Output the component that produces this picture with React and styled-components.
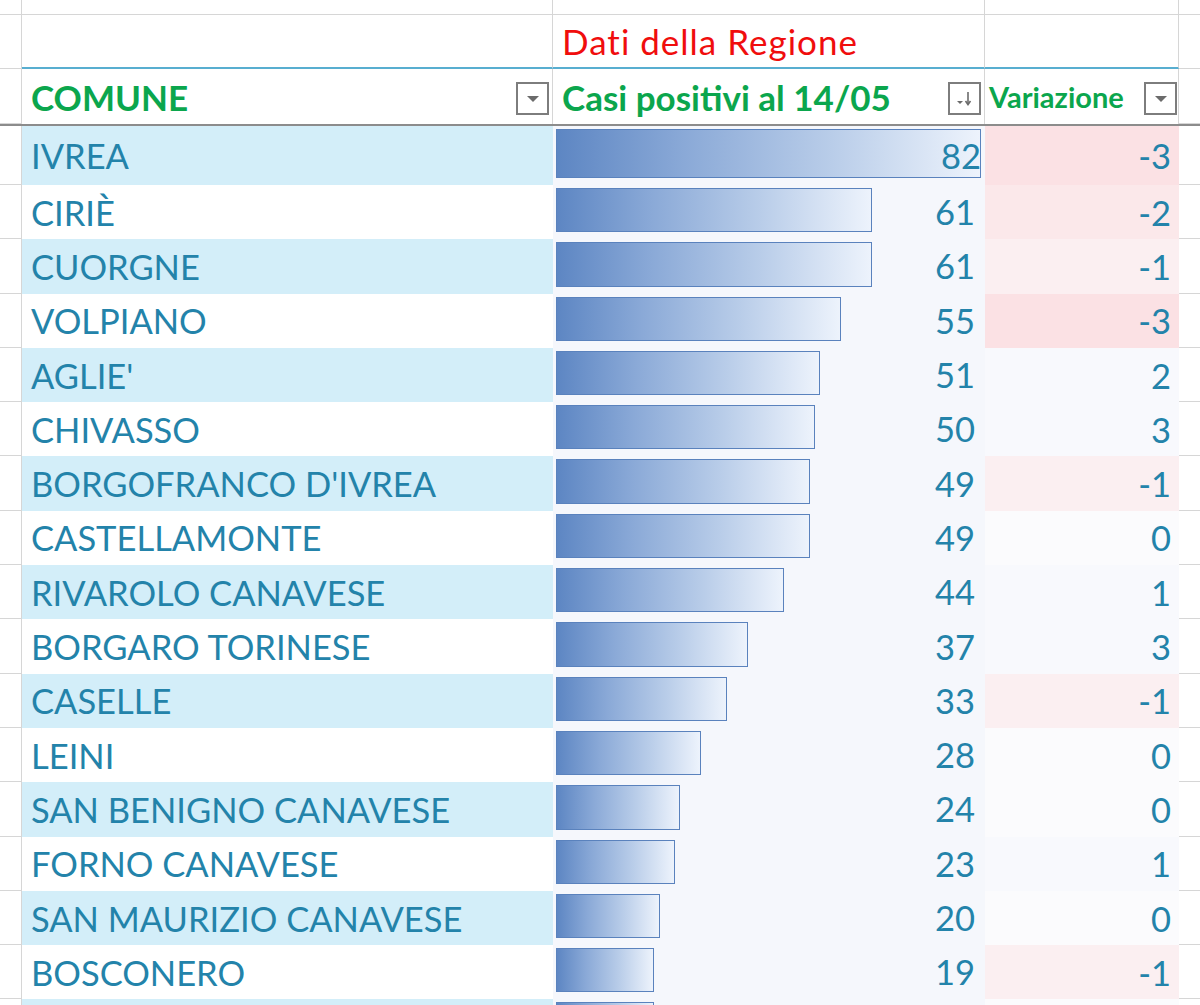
import React from 'react';
import styled, { createGlobalStyle } from 'styled-components';

const data = [
  ['IVREA', 82, -3],
  ['CIRIÈ', 61, -2],
  ['CUORGNE', 61, -1],
  ['VOLPIANO', 55, -3],
  ["AGLIE'", 51, 2],
  ['CHIVASSO', 50, 3],
  ["BORGOFRANCO D'IVREA", 49, -1],
  ['CASTELLAMONTE', 49, 0],
  ['RIVAROLO CANAVESE', 44, 1],
  ['BORGARO TORINESE', 37, 3],
  ['CASELLE', 33, -1],
  ['LEINI', 28, 0],
  ['SAN BENIGNO CANAVESE', 24, 0],
  ['FORNO CANAVESE', 23, 1],
  ['SAN MAURIZIO CANAVESE', 20, 0],
  ['BOSCONERO', 19, -1],
  ['', 19, 0],
];

const MAX = 82;
const BAR_MAX = 425;

const GlobalStyle = createGlobalStyle`
  html, body {
    margin: 0;
    padding: 0;
    background: #fff;
    overflow: hidden;
  }
  body {
    font-family: Lato, "Open Sans", sans-serif;
  }
`;

const Sheet = styled.div`
  width: 1200px;
  height: 1005px;
  overflow: hidden;
  background: #fff;
`;

const Line = styled.div`
  display: grid;
  grid-template-columns: 22px 531px 432px 194px 1fr;
  height: ${p => p.$h}px;
  border-bottom: ${p => p.$rule || 'none'};
`;

const Grid = styled.div`
  border-bottom: 1px solid #d6d6d6;
  border-right: ${p => (p.$edge ? '1px solid #d6d6d6' : 'none')};
`;

const TitleCell = styled.div`
  border-right: 1px solid #d6d6d6;
  border-bottom: 2px solid #58aed0;
  display: flex;
  align-items: center;
  padding-left: 9px;
  color: #f00d0d;
  font-size: 35px;
  letter-spacing: 1px;
`;

const HeadCell = styled.div`
  border-right: 1px solid #d6d6d6;
  display: flex;
  align-items: center;
  justify-content: space-between;
  padding: 0 ${p => p.$pr || 3}px 0 ${p => p.$pl || 9}px;
  color: #0ba64d;
  font-weight: 700;
  font-size: ${p => p.$size || 35}px;
`;

const FilterBtn = styled.div`
  width: 33px;
  height: 33px;
  box-sizing: border-box;
  border: 2px solid #7d7d7d;
  background: #fff;
  display: flex;
  align-items: center;
  justify-content: center;
  flex-shrink: 0;
  margin-top: 3px;
`;

const NameCell = styled.div`
  background: ${p => (p.$alt ? '#d3eef9' : '#fff')};
  display: flex;
  align-items: center;
  padding-left: 9px;
  color: #2383aa;
  font-size: 34.5px;
`;

const BarCell = styled.div`
  background: #f5f7fc;
  display: grid;
  padding: 3px 10px 0 3px;
`;

const Bar = styled.div`
  grid-area: 1 / 1;
  justify-self: start;
  align-self: start;
  height: ${p => p.$h}px;
  box-sizing: border-box;
  border: 1px solid #5a82bd;
  background: linear-gradient(to right, #5d86c3 0%, #8aa9d7 30%, #b9cde9 65%, #edf3fc 100%);
`;

const Num = styled.div`
  grid-area: 1 / 1;
  justify-self: end;
  align-self: center;
  margin-top: ${p => p.$shift}px;
  color: #2383aa;
  font-size: 34.5px;
`;

const tone = v => {
  if (v < 0) {
    const t = -v / 3;
    const g = Math.round(246 - 21 * t);
    const b = Math.round(247 - 19 * t);
    return `rgb(251, ${g}, ${b})`;
  }
  return v === 0 ? '#fbfbfd' : '#f8f9fd';
};

const VarCell = styled.div`
  background: ${p => tone(p.$v)};
  display: flex;
  align-items: center;
  justify-content: flex-end;
  padding-right: 8px;
  color: #2383aa;
  font-size: 34.5px;
`;

const DropIcon = () => (
  <svg width="16" height="10" viewBox="0 0 16 10">
    <path d="M2 3 L14 3 L8 9 Z" fill="#6b6b6b" />
  </svg>
);

const SortIcon = () => (
  <svg width="22" height="22" viewBox="0 0 22 22">
    <path d="M3 14 L9 14 L6 17 Z" fill="#6b6b6b" />
    <path d="M14 5 L14 17" stroke="#6b6b6b" strokeWidth="1.6" />
    <path d="M11.5 14 L14 17.5 L16.5 14" stroke="#6b6b6b" strokeWidth="1.6" fill="none" />
  </svg>
);

const App = () => (
  <Sheet>
    <GlobalStyle />
    <Line $h={15}>
      <Grid $edge />
      <Grid $edge />
      <Grid $edge />
      <Grid $edge />
      <Grid />
    </Line>
    <Line $h={54}>
      <Grid $edge />
      <TitleCell />
      <TitleCell>Dati della Regione</TitleCell>
      <TitleCell />
      <Grid />
    </Line>
    <Line $h={55} $rule="2px solid #8c8c8c">
      <Grid $edge />
      <HeadCell>
        COMUNE
        <FilterBtn><DropIcon /></FilterBtn>
      </HeadCell>
      <HeadCell>
        Casi positivi al 14/05
        <FilterBtn><SortIcon /></FilterBtn>
      </HeadCell>
      <HeadCell $size={29} $pl={4} $pr={1}>
        Variazione
        <FilterBtn><DropIcon /></FilterBtn>
      </HeadCell>
      <Grid />
    </Line>
    {data.map(([name, cases, delta], i) => {
      const h = i === 0 ? 59 : 54.3;
      return (
        <Line key={i} $h={h}>
          <Grid $edge />
          <NameCell $alt={i % 2 === 0}>{name}</NameCell>
          <BarCell>
            <Bar $h={h - 10} style={{ width: (cases / MAX) * BAR_MAX }} />
            {name && <Num $shift={-4}>{cases}</Num>}
          </BarCell>
          <VarCell $v={delta}>{name ? delta : ''}</VarCell>
          <Grid />
        </Line>
      );
    })}
  </Sheet>
);

export default App;
